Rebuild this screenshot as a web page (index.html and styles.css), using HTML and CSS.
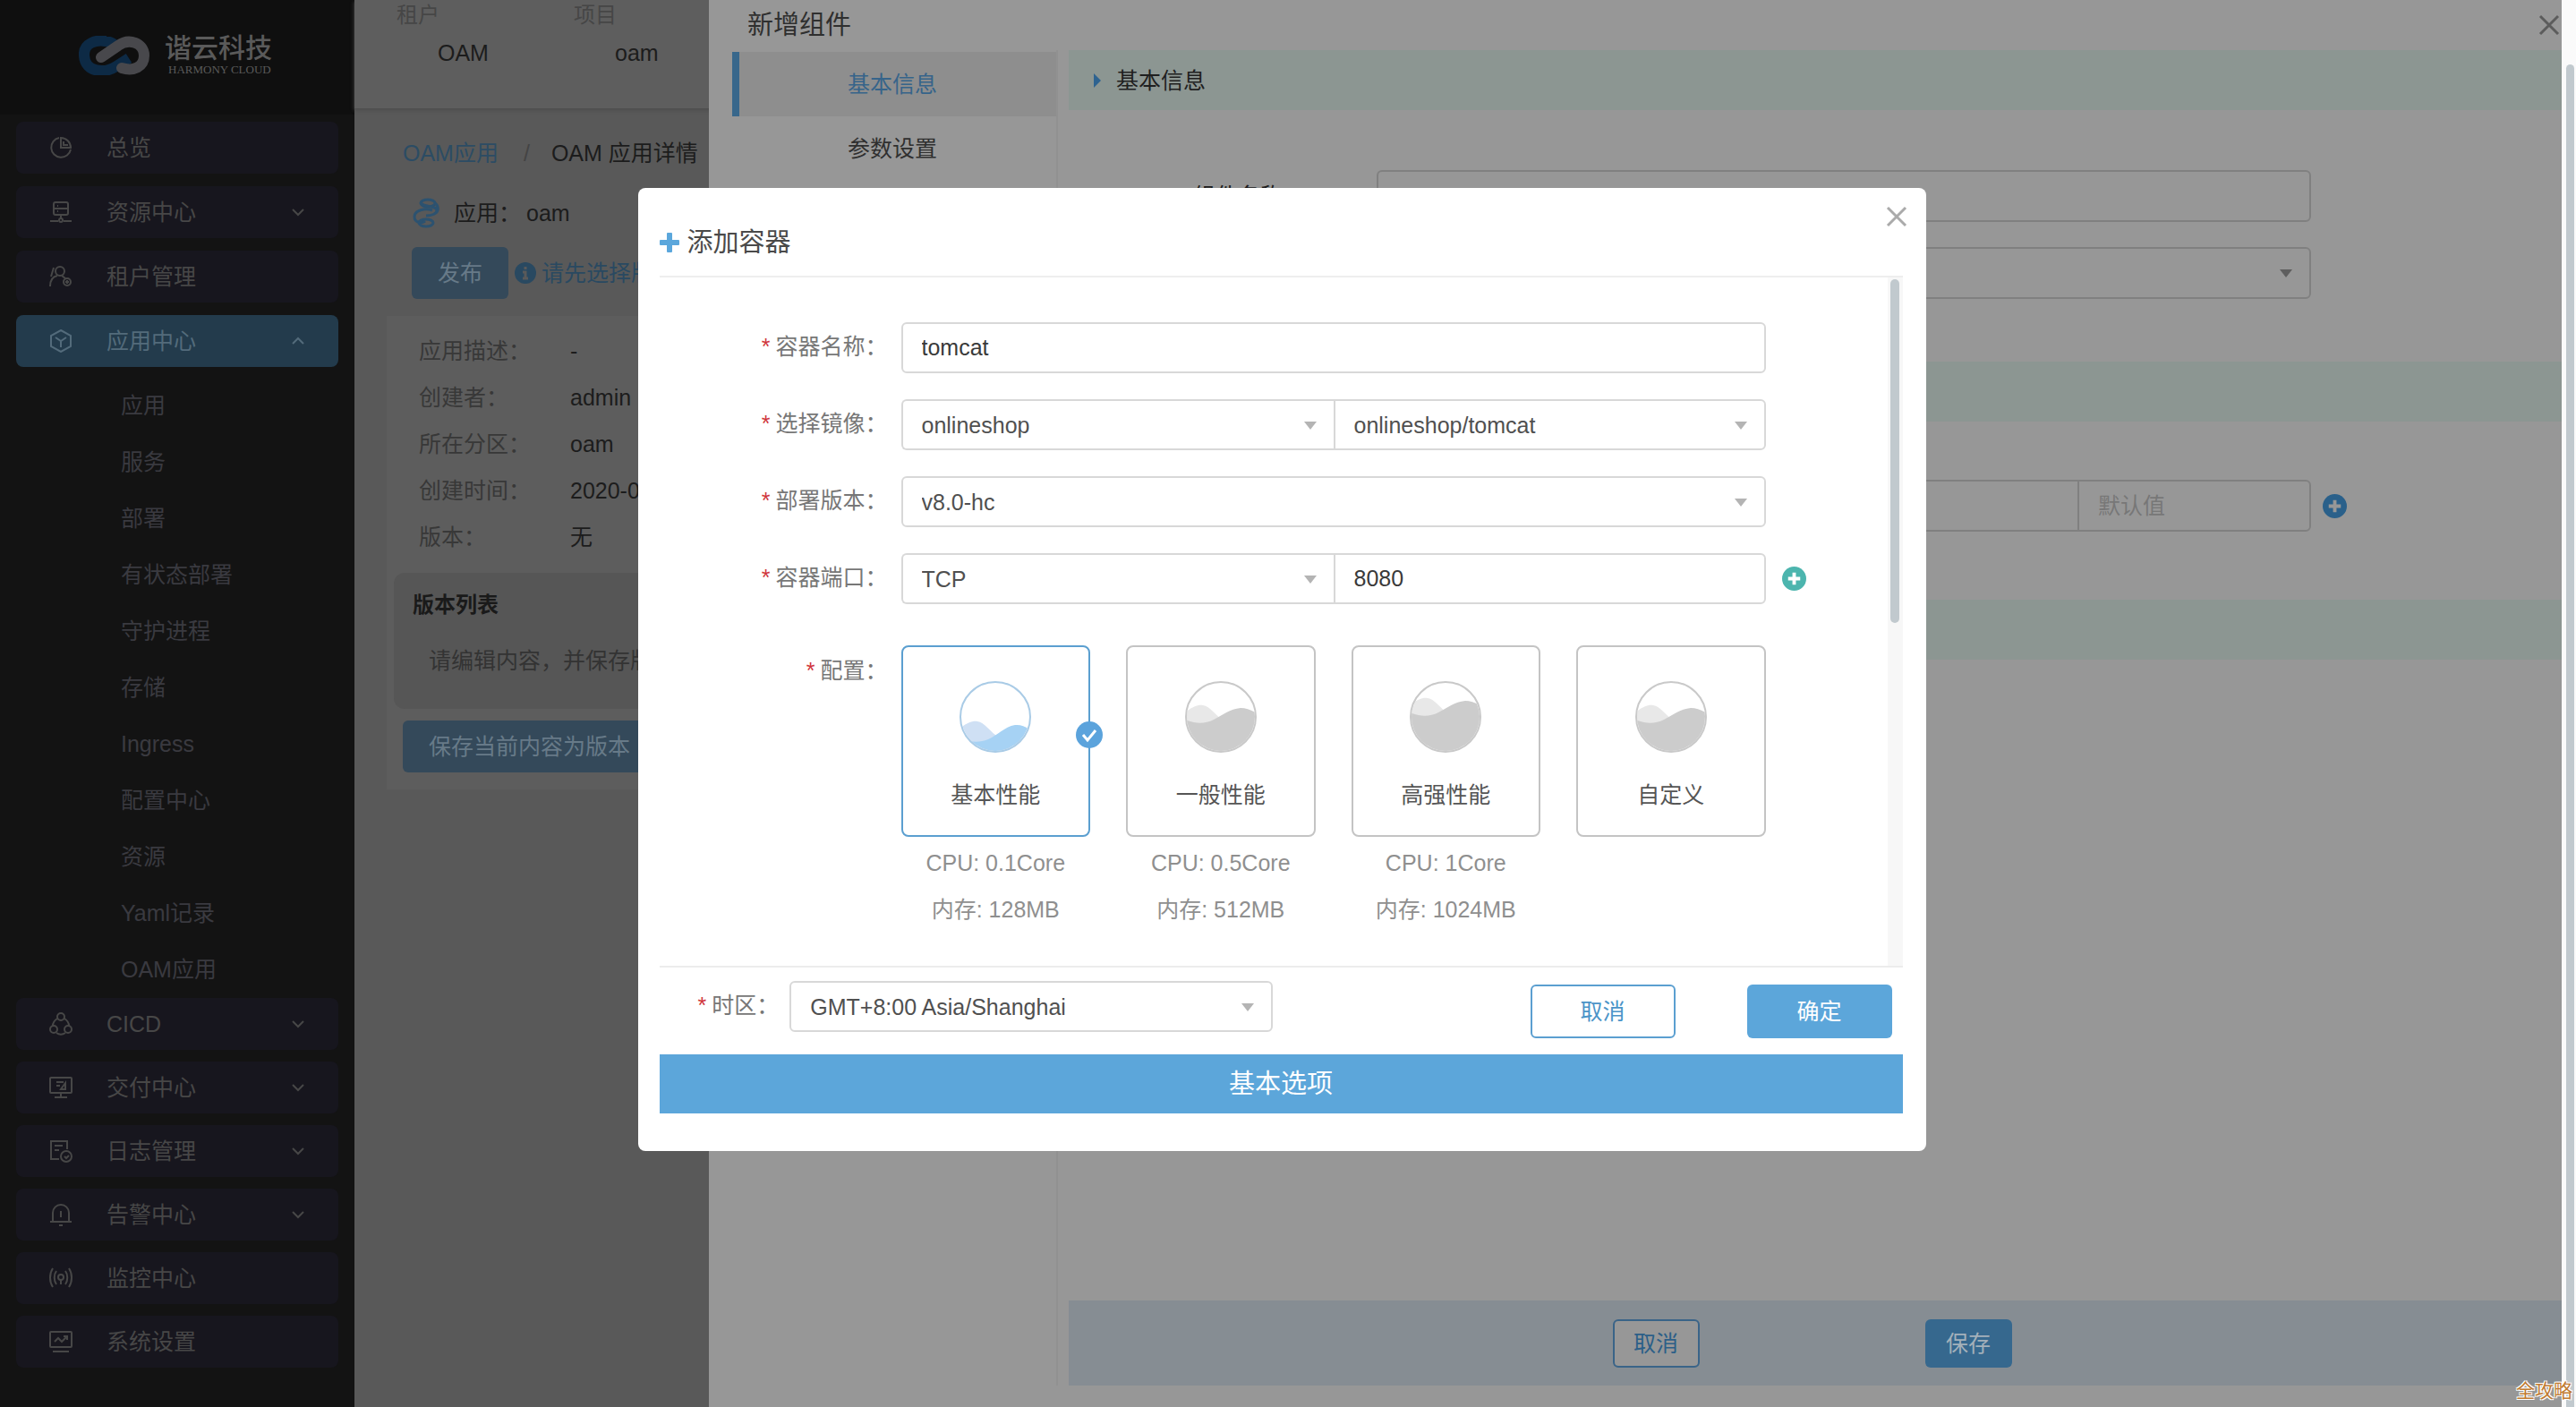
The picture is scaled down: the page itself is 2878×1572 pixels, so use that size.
FILE: index.html
```html
<!DOCTYPE html>
<html lang="zh-CN">
<head>
<meta charset="utf-8">
<meta name="viewport" content="width=device-width, initial-scale=1">
<title>OAM 应用详情</title>
<link rel="stylesheet" href="styles.css">
</head>
<body>
<svg class="sprite" aria-hidden="true">
  <symbol id="chevron" viewBox="0 0 16 10"><path d="M2 2l6 6 6-6"/></symbol>
  <symbol id="plus-circle" viewBox="0 0 28 28"><circle cx="14" cy="14" r="14" fill="currentColor" stroke="none"/><path class="hole" d="M14 7v14M7 14h14"/></symbol>
  <symbol id="close" viewBox="0 0 24 24"><path d="M2 2l20 20M22 2L2 22"/></symbol>
  <clipPath id="disc"><circle cx="40" cy="40" r="38"/></clipPath>
</svg>

<div class="app">
  <aside class="sidebar">
    <div class="brand">
      <svg class="brand-mark" viewBox="0 0 80 44" aria-hidden="true">
        <path class="mark-blue" d="M56 25L42 34C30 42 7 42 6 22 5 8 20 4 30 6q8 1 12 6"/>
        <path class="mark-grey" d="M25 24L44 11C56 2 73 8 73 22c0 13-12 18-25 14"/>
      </svg>
      <div class="brand-text"><span class="brand-cn">谐云科技</span><span class="brand-en">HARMONY CLOUD</span></div>
    </div>
    <nav class="nav">
      <ul class="menu">
        <li><a class="item" href="#"><svg class="icon" viewBox="0 0 26 26"><path d="M11 2A11 11 0 1 0 24 15M13 2v11h11A11 11 0 0 0 13 2z"/><path d="M16 6v4h5"/></svg><span>总览</span></a></li>
        <li><a class="item" href="#"><svg class="icon" viewBox="0 0 26 26"><rect x="5" y="2" width="16" height="14" rx="2"/><path d="M5 9h16M9 6h1M9 12h1M13 16v4M1 23h9M16 23h9"/><circle cx="13" cy="22" r="2"/></svg><span>资源中心</span><svg class="chev"><use href="#chevron"/></svg></a></li>
        <li><a class="item" href="#"><svg class="icon" viewBox="0 0 26 26"><circle cx="12" cy="7" r="5"/><path d="M1 24c0-7 3-11 8-12M14 12l4 3M5 3L2 13"/><circle cx="20" cy="19" r="4"/><path d="M20 17v4M18 19h4"/></svg><span>租户管理</span></a></li>
        <li><a class="item active" href="#"><svg class="icon" viewBox="0 0 26 26"><path d="M13 1l11 6v12l-11 6-11-6V7zM7 9l6 4 6-4M13 13v7"/></svg><span>应用中心</span><svg class="chev up"><use href="#chevron"/></svg></a></li>
      </ul>
      <ul class="submenu">
        <li><a href="#">应用</a></li>
        <li><a href="#">服务</a></li>
        <li><a href="#">部署</a></li>
        <li><a href="#">有状态部署</a></li>
        <li><a href="#">守护进程</a></li>
        <li><a href="#">存储</a></li>
        <li><a href="#">Ingress</a></li>
        <li><a href="#">配置中心</a></li>
        <li><a href="#">资源</a></li>
        <li><a href="#">Yaml记录</a></li>
        <li><a href="#">OAM应用</a></li>
      </ul>
      <ul class="menu tight">
        <li><a class="item" href="#"><svg class="icon" viewBox="0 0 26 26"><circle cx="13" cy="5" r="4"/><circle cx="5" cy="19" r="4"/><circle cx="21" cy="19" r="4"/><path d="M9 7c-3 2-5 5-5 8M17 7c3 2 5 5 5 8M8 23c3 2 7 2 10 0"/></svg><span>CICD</span><svg class="chev"><use href="#chevron"/></svg></a></li>
        <li><a class="item" href="#"><svg class="icon" viewBox="0 0 26 26"><rect x="1" y="2" width="24" height="17" rx="1"/><path d="M6 24h14M13 19v5M8 7h8M8 11h4M18 8v7h-5z"/></svg><span>交付中心</span><svg class="chev"><use href="#chevron"/></svg></a></li>
        <li><a class="item" href="#"><svg class="icon" viewBox="0 0 26 26"><path d="M11 22H2V2h18v9M6 7h9M6 12h5"/><circle cx="19" cy="19" r="6"/><path d="M17 19l2 2 3-3"/></svg><span>日志管理</span><svg class="chev"><use href="#chevron"/></svg></a></li>
        <li><a class="item" href="#"><svg class="icon" viewBox="0 0 26 26"><path d="M4 21V11a9 9 0 0 1 18 0v10M1 21h24M11 25h4M13 9v7"/></svg><span>告警中心</span><svg class="chev"><use href="#chevron"/></svg></a></li>
        <li><a class="item" href="#"><svg class="icon" viewBox="0 0 26 26"><circle cx="13" cy="12" r="3"/><path d="M4 2C0 8 0 17 4 23M22 2c4 6 4 15 0 21M8 5c-3 4-3 11 0 15M18 5c3 4 3 11 0 15M13 15v5"/></svg><span>监控中心</span></a></li>
        <li><a class="item" href="#"><svg class="icon" viewBox="0 0 26 26"><rect x="1" y="2" width="24" height="17" rx="1"/><path d="M4 24h18M6 13l4-4 4 4 6-6M20 11V7h-4"/></svg><span>系统设置</span></a></li>
      </ul>
    </nav>
  </aside>

  <main class="main">
    <header class="topbar">
      <dl class="scope"><dt>租户</dt><dd>OAM</dd></dl>
      <dl class="scope"><dt>项目</dt><dd>oam</dd></dl>
    </header>
    <nav class="crumbs"><a href="#">OAM应用</a><span class="slash">/</span><span>OAM 应用详情</span></nav>
    <div class="app-name">
      <svg viewBox="0 0 30 34" aria-hidden="true"><ellipse cx="17" cy="6" rx="8" ry="4"/><path d="M9 5c2 6 18 3 18 9 0 4-6 6-12 6M25 6c5 4 4 10-1 12M22 14c-8-3-20 0-20 7s8 8 12 5"/><ellipse cx="15" cy="28" rx="8" ry="4"/></svg>
      <span>应用：</span><span>oam</span>
    </div>
    <div class="publish">
      <button class="dim-btn" type="button">发布</button>
      <svg viewBox="0 0 24 24" aria-hidden="true"><circle cx="12" cy="12" r="12" fill="currentColor"/><path class="info-i" d="M12 5v3M9 11h3v7M9 18h6"/></svg>
      <span>请先选择版本</span>
    </div>
    <section class="detail">
      <dl class="facts">
        <dt>应用描述：</dt><dd>-</dd>
        <dt>创建者：</dt><dd>admin</dd>
        <dt>所在分区：</dt><dd>oam</dd>
        <dt>创建时间：</dt><dd>2020-0</dd>
        <dt>版本：</dt><dd>无</dd>
      </dl>
      <div class="versions">
        <h2>版本列表</h2>
        <p>请编辑内容，并保存版本</p>
      </div>
      <button class="dim-btn wide" type="button">保存当前内容为版本</button>
    </section>
  </main>

  <section class="drawer" aria-label="新增组件">
    <header class="drawer-head"><h1>新增组件</h1><button class="x-btn" type="button" aria-label="关闭"><svg><use href="#close"/></svg></button></header>
    <div class="drawer-body">
      <div class="tabs"><button class="tab on" type="button">基本信息</button><button class="tab" type="button">参数设置</button></div>
      <div class="panel">
        <h2 class="bar"><span class="tri"></span>基本信息</h2>
        <div class="fields first">
          <label for="comp-name">组件名称：</label><input id="comp-name" type="text">
          <span></span><div class="pick"><select aria-label="组件类型"><option></option></select></div>
        </div>
        <div class="bar"></div>
        <div class="fields second">
          <span></span>
          <div class="trio"><input type="text" aria-label="参数名"><input type="text" aria-label="默认值" placeholder="默认值"></div>
          <button class="add blue" type="button" aria-label="添加参数"><svg><use href="#plus-circle"/></svg></button>
        </div>
        <div class="bar"></div>
        <div class="rest"></div>
        <footer class="drawer-foot"><button class="sm ghost" type="button">取消</button><button class="sm solid" type="button">保存</button></footer>
      </div>
    </div>
  </section>

  <div class="overlay">
    <div class="modal" role="dialog" aria-labelledby="modal-title">
      <button class="x-btn modal-x" type="button" aria-label="关闭"><svg><use href="#close"/></svg></button>
      <header class="modal-head">
        <svg viewBox="0 0 22 22" aria-hidden="true"><path d="M8 1q0-1 1-1h4q1 0 1 1v7h7q1 0 1 1v4q0 1-1 1h-7v7q0 1-1 1H9q-1 0-1-1v-7H1q-1 0-1-1V9q0-1 1-1h7z" fill="#5ba7dc"/></svg>
        <h2 id="modal-title">添加容器</h2>
      </header>
      <div class="modal-body">
        <div class="form">
          <label class="req" for="c-name"><i>*</i>容器名称：</label>
          <input class="ctl" id="c-name" type="text" value="tomcat">

          <label class="req" for="c-repo"><i>*</i>选择镜像：</label>
          <div class="duo">
            <div class="pick"><select id="c-repo"><option>onlineshop</option></select></div>
            <div class="pick"><select aria-label="镜像"><option>onlineshop/tomcat</option></select></div>
          </div>

          <label class="req" for="c-ver"><i>*</i>部署版本：</label>
          <div class="pick ctl"><select id="c-ver"><option>v8.0-hc</option></select></div>

          <label class="req" for="c-proto"><i>*</i>容器端口：</label>
          <div class="duo">
            <div class="pick"><select id="c-proto"><option>TCP</option></select></div>
            <input type="text" aria-label="端口" value="8080">
          </div>
          <button class="add teal" type="button" aria-label="添加端口"><svg><use href="#plus-circle"/></svg></button>

          <span class="req config"><i>*</i>配置：</span>
          <div class="cards config">
            <div class="choice">
              <label class="card"><input type="radio" name="perf" checked>
                <svg class="gauge on" viewBox="0 0 80 80"><g clip-path="url(#disc)"><path fill="#cfe0f4" d="M0 53C8 47 14 44 20 45c8 1 14 11 20 15s12 8 20 7l20-4v20H0z"/><path fill="#a6d2f4" d="M0 63c12 6 22 6 32 2s18-14 30-16q9-1 18 6v28H0z"/></g><circle class="ring" cx="40" cy="40" r="39"/></svg>
                <span>基本性能</span>
                <svg class="tick" viewBox="0 0 30 30"><circle cx="15" cy="15" r="15" fill="#5ba3dc"/><path class="tick-line" d="M8 15l5 6 9-11"/></svg>
              </label>
              <p>CPU: 0.1Core</p><p>内存: 128MB</p>
            </div>
            <div class="choice">
              <label class="card"><input type="radio" name="perf">
                <svg class="gauge" viewBox="0 0 80 80"><g clip-path="url(#disc)"><path fill="#e8e8e8" d="M0 35C8 29 14 26 20 27c8 1 14 11 20 15s12 8 20 7l20-4v40H0z"/><path fill="#cccccc" d="M0 43c12 5 22 5 32 0s18-12 30-13q9 0 18 6v48H0z"/></g><circle class="ring" cx="40" cy="40" r="39"/></svg>
                <span>一般性能</span>
              </label>
              <p>CPU: 0.5Core</p><p>内存: 512MB</p>
            </div>
            <div class="choice">
              <label class="card"><input type="radio" name="perf">
                <svg class="gauge" viewBox="0 0 80 80"><g clip-path="url(#disc)"><path fill="#e8e8e8" d="M0 27C8 21 14 18 20 19c8 1 14 11 20 15s12 8 20 7l20-4v48H0z"/><path fill="#cccccc" d="M0 35c12 5 22 5 32 0s18-12 30-13q9 0 18 6v56H0z"/></g><circle class="ring" cx="40" cy="40" r="39"/></svg>
                <span>高强性能</span>
              </label>
              <p>CPU: 1Core</p><p>内存: 1024MB</p>
            </div>
            <div class="choice">
              <label class="card"><input type="radio" name="perf">
                <svg class="gauge" viewBox="0 0 80 80"><g clip-path="url(#disc)"><path fill="#e8e8e8" d="M0 35C8 29 14 26 20 27c8 1 14 11 20 15s12 8 20 7l20-4v40H0z"/><path fill="#cccccc" d="M0 43c12 5 22 5 32 0s18-12 30-13q9 0 18 6v48H0z"/></g><circle class="ring" cx="40" cy="40" r="39"/></svg>
                <span>自定义</span>
              </label>
            </div>
          </div>
        </div>
        <div class="track"><div class="thumb"></div></div>
      </div>
      <div class="modal-foot">
        <label class="req" for="tz"><i>*</i>时区：</label>
        <div class="pick tz"><select id="tz"><option>GMT+8:00 Asia/Shanghai</option></select></div>
        <div class="actions"><button class="btn ghost" type="button">取消</button><button class="btn solid" type="button">确定</button></div>
      </div>
      <button class="options" type="button">基本选项</button>
    </div>
  </div>

  <div class="page-track"><div class="page-thumb"></div></div>
  <span class="mark">全攻略</span>
</div>
</body>
</html>
```
FILE: styles.css
```css
* { box-sizing: border-box; }
body {
  margin: 0;
  background: #595959;
  font-family: "Liberation Sans", "Noto Sans CJK SC", sans-serif;
  font-size: 25px;
  line-height: 40px;
  color: #1c1c1c;
}
h1, h2, p, ul, dl, dd { margin: 0; padding: 0; font-weight: 400; }
ul { list-style: none; }
a { text-decoration: none; color: inherit; }
button, input, select { font: inherit; color: inherit; margin: 0; padding: 0; background: none; border: 0; }
svg { display: block; flex: none; fill: none; stroke: currentColor; stroke-width: 2; }
svg [fill] { stroke: none; }
.sprite { position: absolute; width: 0; height: 0; }

.app { position: relative; display: flex; min-height: 100vh; overflow: hidden; }

/* sidebar */
.sidebar { width: 396px; flex: none; background: #131313; color: #474747; }
.brand { display: flex; gap: 16px; align-items: center; height: 128px; padding: 0 0 4px 88px; background: #0f0f0f; }
.brand-mark { width: 80px; height: 44px; stroke-width: 12; }
.mark-blue { stroke: #0d2a45; }
.mark-grey { stroke: #48484c; stroke-linecap: round; }
.brand-text { display: flex; flex-direction: column; color: #5a5a5a; }
.brand-cn { font-size: 30px; line-height: 32px; font-weight: 500; }
.brand-en { padding-left: 4px; font-family: "Liberation Serif", serif; font-size: 13px; line-height: 16px; }
.menu { display: flex; flex-direction: column; gap: 14px; padding: 8px 18px 0; }
.menu.tight { gap: 13px; padding-top: 0; }
.item { display: flex; align-items: center; height: 58px; padding: 0 37px; border-radius: 8px; background: #17161e; }
.item.active { background: #233b4c; color: #536b7b; }
.icon { width: 26px; height: 26px; margin-right: 38px; }
.chev { width: 16px; height: 10px; margin-left: auto; }
.chev.up { transform: rotate(180deg); }
.submenu { padding: 12px 0 0 135px; color: #3a3a40; line-height: 63px; }

/* page behind the drawer */
.main { flex: 1; min-width: 0; background: #595959; }
.topbar { display: flex; height: 121px; padding-left: 47px; background: #5e5e5e; box-shadow: 0 2px 4px #4c4c4c; }
.scope { width: 198px; }
.scope dt { font-size: 24px; line-height: 34px; color: #464646; }
.scope dd { padding: 5px 0 0 46px; }
.crumbs { display: flex; padding: 30px 0 0 54px; white-space: nowrap; }
.crumbs a { color: #2c4c64; }
.slash { padding: 0 24px 0 28px; color: #444; }
.app-name { display: flex; align-items: center; padding: 27px 0 0 65px; }
.app-name svg { width: 30px; height: 34px; margin-right: 16px; color: #2c5270; stroke-width: 3; }
.app-name span:last-child { padding-left: 6px; }
.publish { display: flex; align-items: center; padding: 18px 0 19px 64px; color: #294961; white-space: nowrap; }
.publish svg { width: 24px; height: 24px; margin: 0 6px 0 7px; }
.info-i { stroke: #5a5a5a; stroke-width: 3; }
.dim-btn { width: 108px; height: 58px; border-radius: 6px; background: #34495a; color: #677a88; }
.detail { margin-left: 36px; padding: 13px 0 19px; background: #5d5d5d; white-space: nowrap; }
.facts { display: grid; grid-template-columns: 169px 1fr; padding-left: 36px; line-height: 52px; }
.facts dt { color: #383838; }
.versions { margin: 14px 0 0 8px; height: 152px; padding: 16px 0 0 21px; border-radius: 12px; background: #565656; color: #333; }
.versions h2 { font-size: 24px; font-weight: 700; color: #1a1a1a; }
.versions p { padding: 22px 0 0 18px; }
.dim-btn.wide { display: block; width: 400px; margin: 13px 0 0 18px; padding-left: 29px; text-align: left; }

/* drawer */
.drawer { position: absolute; inset: 0 16px 0 792px; display: flex; flex-direction: column; background: #979797; }
.drawer-head { display: flex; justify-content: space-between; align-items: center; height: 56px; padding: 0 2px 0 43px; color: #2f2f2f; }
.drawer-head h1 { font-size: 29px; }
.x-btn { color: #5c5c5c; }
.x-btn svg { width: 24px; height: 24px; stroke-width: 3; }
.drawer-body { flex: 1; display: flex; gap: 12px; padding: 0 0 24px 26px; }
.tabs { width: 364px; padding-top: 2px; border-right: 2px solid #919191; }
.tab { display: block; width: 100%; height: 72px; padding-right: 12px; border-left: 8px solid transparent; color: #2f2f2f; }
.tab.on { border-color: #38678b; background: #8e8e8e; color: #36648a; }
.panel { flex: 1; display: flex; flex-direction: column; }
.bar { display: flex; align-items: center; height: 67px; padding-left: 28px; background: #8c9692; font-size: 25px; color: #1f1f1f; }
.tri { margin-right: 17px; border: 8px solid transparent; border-left-color: #2e6390; border-right-width: 0; }
.fields { display: grid; grid-template-columns: 344px minmax(0, 1044px) 1fr; align-items: center; }
.fields label { padding-left: 139px; }
.fields input, .drawer .pick { height: 58px; border: 2px solid #808080; border-radius: 6px; }
.first { grid-template-rows: 58px 58px; row-gap: 28px; height: 281px; padding-top: 67px; align-content: start; }
.first label, .first > span { grid-column: 1; }
.second { height: 199px; padding-top: 65px; align-content: start; }
.trio { display: grid; grid-template-columns: 3fr 1fr; }
.trio input { min-width: 0; padding-left: 21px; }
.trio input:first-child { border-right: 0; border-radius: 6px 0 0 6px; }
.trio input:last-child { border-radius: 0 6px 6px 0; }
.trio ::placeholder { color: #777; opacity: 1; }
.rest { flex: 1; }
.drawer-foot { display: flex; justify-content: center; align-items: center; gap: 252px; height: 95px; padding-right: 7px; background: #868d93; }
.sm { width: 97px; height: 54px; border-radius: 6px; }
.sm.ghost { border: 2px solid #3a6488; background: #979797; color: #2c5f88; }
.sm.solid { background: #36688e; color: #a3b0ba; }

/* shared controls */
.pick { position: relative; min-width: 0; }
.pick::after { content: ""; position: absolute; right: 19px; top: 50%; margin-top: -4px; border: 7px solid transparent; border-top: 9px solid #b4b4b4; border-bottom: 0; pointer-events: none; }
.drawer .pick::after { border-top-color: #5e5e5e; }
.pick select { width: 100%; height: 100%; appearance: none; outline: 0; padding-left: 21px; }
.add svg { width: 27px; height: 27px; }
.hole { stroke: var(--hole, #fff); stroke-width: 4; }
.add.blue { --hole: #979797; justify-self: start; padding-left: 13px; color: #2a608a; }
.add.teal { justify-self: start; padding-left: 3px; color: #4cb5ae; }

/* modal */
.overlay { position: absolute; inset: 0 14px 0 0; display: flex; justify-content: center; align-items: flex-start; padding-top: 210px; }
.modal { position: relative; width: 50vw; min-width: 1200px; padding: 0 26px 42px 24px; border-radius: 8px; background: #fff; color: #505050; }
.modal-x { position: absolute; top: 20px; right: 21px; color: #aaa; }
.modal-head { display: flex; align-items: center; gap: 9px; padding: 41px 0 17px; border-bottom: 2px solid #eee; color: #4a4a4a; }
.modal-head svg { width: 22px; height: 22px; }
.modal-head h2 { font-size: 29px; }
.modal-body { position: relative; padding: 50px 17px 37px 0; border-bottom: 2px solid #ececec; }
.form { display: grid; grid-template-columns: 255px minmax(0, 1fr) 121px; column-gap: 15px; row-gap: 29px; align-items: center; }
.form > .req { grid-column: 1; justify-self: end; }
.req { display: flex; gap: 6px; padding-bottom: 3px; color: #777; white-space: nowrap; }
.req i { font-style: normal; color: #d0353c; }
.ctl, .duo > *, .tz { height: 57px; border: 2px solid #d8d8d8; border-radius: 6px; }
.ctl { min-width: 0; padding-left: 21px; color: #3a3a3a; }
.pick.ctl { padding-left: 0; color: inherit; }
.duo { display: grid; grid-template-columns: 1fr 1fr; }
.duo > * { min-width: 0; }
.duo > :first-child { border-right: 0; border-radius: 6px 0 0 6px; }
.duo > :last-child { border-radius: 0 6px 6px 0; }
.duo > input { padding-left: 21px; color: #3a3a3a; }
.config { margin-top: 17px; }
.req.config { align-self: start; line-height: 57px; }
.cards { display: grid; grid-template-columns: repeat(4, 1fr); gap: 40px; }
.choice { text-align: center; color: #8f8f8f; line-height: 52px; }
.card { position: relative; display: flex; flex-direction: column; align-items: center; height: 214px; margin-bottom: 3px; padding-top: 38px; border: 2px solid #c4c4c4; border-radius: 8px; line-height: 40px; color: #555; }
.card:has(:checked) { border-color: #5b9fd0; }
.card input { position: absolute; opacity: 0; }
.gauge { width: 80px; height: 80px; margin-bottom: 27px; }
.ring { stroke: #c9c9c9; }
.on .ring { stroke: #a9cbe6; }
.tick { position: absolute; top: 83px; right: -16px; width: 30px; height: 30px; }
.tick-line { stroke: #fff; stroke-width: 3; }
.track { position: absolute; top: 0; bottom: 0; right: 0; width: 17px; padding: 2px 4px 0 3px; background: #f7f7f7; }
.thumb { height: 50%; border-radius: 5px; background: #c1c9ce; }
.modal-foot { display: flex; padding: 15px 12px 18px 43px; }
.modal-foot .req { line-height: 54px; }
.tz { width: 540px; margin-left: 12px; }
.actions { display: flex; gap: 80px; margin: 4px 0 0 auto; }
.btn { width: 162px; height: 60px; border-radius: 6px; }
.ghost { border: 2px solid #5b9fd0; color: #4b94c8; }
.solid { background: #5ca6da; color: #fff; }
.options { display: block; width: 100%; height: 66px; background: #5ca6da; color: #fff; font-size: 29px; }

/* window scrollbar */
.page-track { flex: none; width: 16px; padding: 72px 2px 0 5px; display: flex; background: #fafafa; }
.page-thumb { flex: 1; border-radius: 5px 5px 0 0; background: #c1c9ce; }
.mark { position: absolute; right: 4px; bottom: 2px; font-size: 21px; line-height: 32px; color: #c07a30; text-shadow: 1px 1px #fff, -1px -1px #fff, 1px -1px #fff, -1px 1px #fff; }
```
